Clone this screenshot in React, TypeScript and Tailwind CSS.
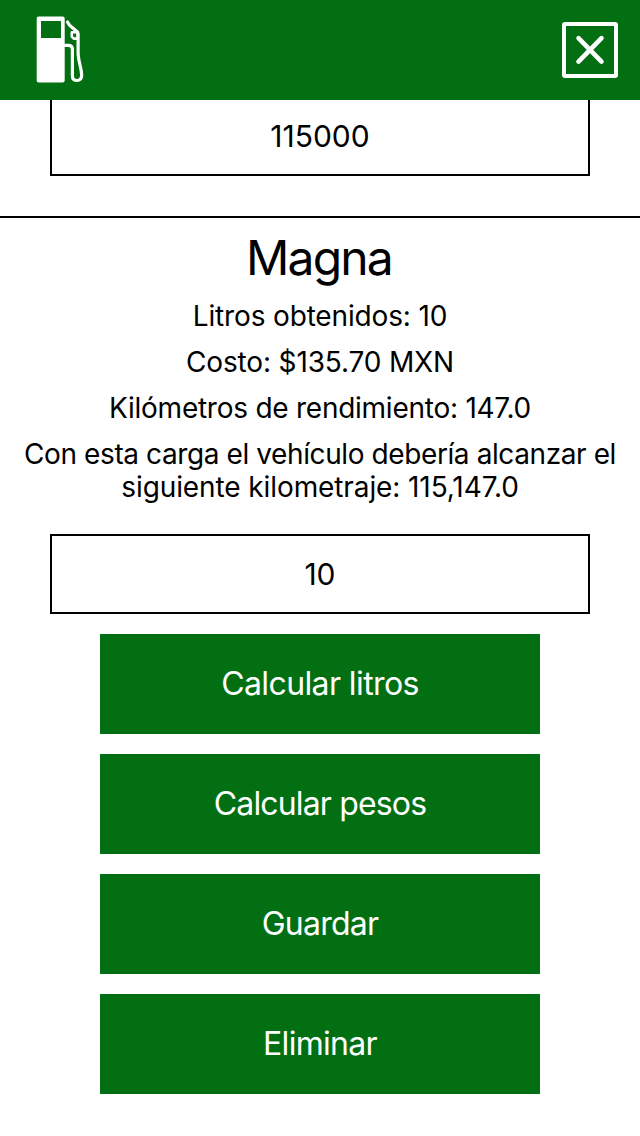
// Tracking is set line by line to keep the widths of the iOS system font
const readings = [
  { text: "Litros obtenidos: 10", className: "tracking-[-0.15px]" },
  { text: "Costo: $135.70 MXN", className: "tracking-[-0.15px]" },
  { text: "Kilómetros de rendimiento: 147.0", className: "tracking-[-0.25px]" },
  { text: "Con esta carga el vehículo debería alcanzar el", className: "tracking-[-0.4px]" },
  { text: "siguiente kilometraje: 115,147.0", className: "mt-[-13px] tracking-[-0.1px]" },
];

const actions = [
  { label: "Calcular litros", className: "tracking-[-0.6px]" },
  { label: "Calcular pesos", className: "tracking-[-0.85px]" },
  { label: "Guardar", className: "tracking-[-0.75px]" },
  { label: "Eliminar", className: "tracking-[-0.7px]" },
];

export default function App() {
  return (
    <div className="flex h-[1136px] w-[640px] flex-col overflow-hidden bg-white font-['Inter',sans-serif] text-black">
      <Header />

      <main className="flex flex-col">
        {/* Odometer field, its top edge scrolled under the header */}
        <div className="mx-[50px] flex h-[76px] items-center justify-center border-x-2 border-b-2 border-black pb-0.5 text-[30px]">
          115000
        </div>

        <section className="mt-10 border-t-2 border-black text-center">
          <h1 className="mt-[11px] pr-0.5 text-[48px] leading-[58px] tracking-[-1.8px]">Magna</h1>
          <div className="mt-[13px] flex flex-col gap-[13px] text-[28px] leading-[33px] whitespace-nowrap">
            {readings.map(({ text, className }) => (
              <p key={text} className={className}>
                {text}
              </p>
            ))}
          </div>
        </section>

        <div className="mx-[50px] mt-[30px] flex h-20 items-center justify-center border-2 border-black text-[30px]">
          10
        </div>

        <div className="mx-[100px] mt-5 flex flex-col gap-5 text-[32px] text-white">
          {actions.map(({ label, className }) => (
            <button key={label} className={`h-[100px] bg-[#027012] ${className}`}>
              {label}
            </button>
          ))}
        </div>
      </main>
    </div>
  );
}

function Header() {
  return (
    <header className="flex h-[100px] shrink-0 items-center justify-between bg-[#027012] pr-[22px] pl-9 text-white">
      <PumpIcon />
      <button aria-label="Cerrar">
        <CloseIcon />
      </button>
    </header>
  );
}

function PumpIcon() {
  return (
    <svg width="48" height="68" viewBox="36 16 48 68" fill="none" stroke="currentColor">
      <path
        fillRule="evenodd"
        fill="currentColor"
        stroke="none"
        d="M38.7 16.5h24q2 0 2 2v62q0 2-2 2h-24q-2 0-2-2v-62q0-2 2-2zM41 21v17h20V21z"
      />
      {/* hose */}
      <path
        d="M64 45.3h4.4q4 0 4 4v26.4q0 4.8 4.6 4.8t4.7-5.2c-.3-8-3.6-14-3.6-23V33"
        strokeWidth="3.2"
      />
      {/* nozzle */}
      <path d="M67.5 22l2 3.2 8.3 7" strokeWidth="3.2" strokeLinecap="round" />
      <path d="M71.8 32.2h5.8v6.4h-3.9l-1.9-2z" strokeWidth="2.6" strokeLinejoin="round" />
    </svg>
  );
}

function CloseIcon() {
  return (
    <svg width="56" height="56" viewBox="0 0 56 56" fill="none" stroke="currentColor">
      <rect x="2" y="2" width="52" height="52" rx="1" strokeWidth="4" />
      <path d="M16.5 16.2l23 23.4M39.5 16.2l-23 23.4" strokeWidth="4.6" strokeLinecap="round" />
    </svg>
  );
}
